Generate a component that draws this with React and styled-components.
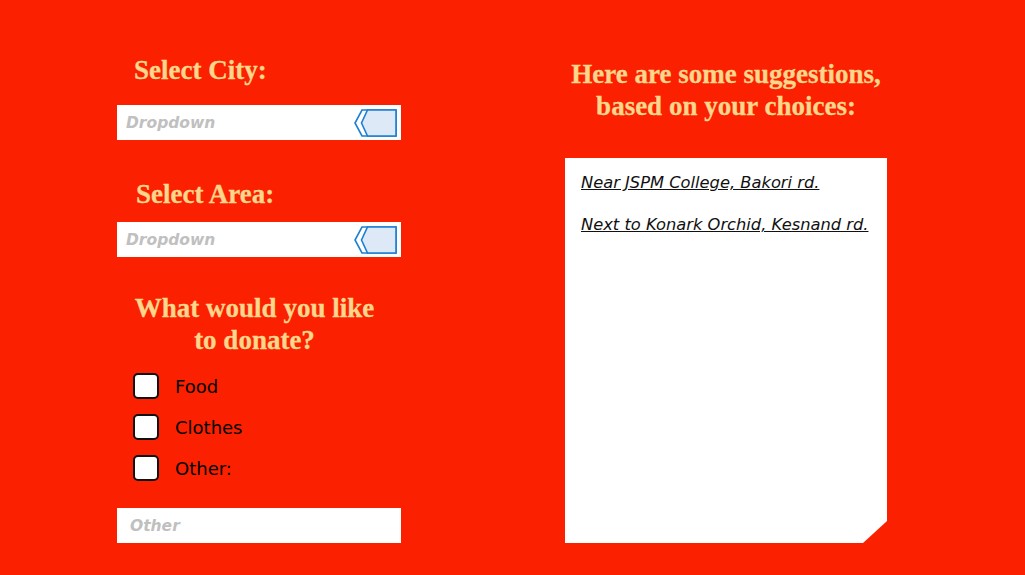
import React from 'react';
import styled, { createGlobalStyle } from 'styled-components';

const GlobalStyle = createGlobalStyle`
  html, body {
    margin: 0;
    padding: 0;
    background: #fb2100;
  }
`;

const Page = styled.div`
  display: flex;
  flex-direction: row;
  align-items: flex-start;
  gap: 164px;
  min-height: 575px;
  padding-left: 117px;
  box-sizing: border-box;
  background: #fb2100;
`;

const LeftColumn = styled.div`
  display: flex;
  flex-direction: column;
  width: 284px;
  padding-top: 56px;
`;

const RightColumn = styled.div`
  display: flex;
  flex-direction: column;
  width: 322px;
  padding-top: 58px;
`;

const Heading = styled.h2`
  margin: 0;
  margin-top: ${(p) => p.$top || 0}px;
  margin-bottom: ${(p) => p.$bottom || 0}px;
  padding-left: ${(p) => p.$indent || 0}px;
  padding-right: ${(p) => p.$right || 0}px;
  text-align: ${(p) => (p.$center ? 'center' : 'left')};
  font-family: 'Liberation Serif', 'Times New Roman', serif;
  font-weight: bold;
  font-size: 27px;
  line-height: ${(p) => (p.$center ? '32px' : '28px')};
  color: #ffd68c;
  -webkit-text-stroke: 0.3px #ffd68c;
`;

const Field = styled.div`
  display: flex;
  align-items: center;
  justify-content: space-between;
  height: 35px;
  background: white;
  padding: 0 4px 0 ${(p) => p.$pad || 9}px;
  box-sizing: border-box;
  margin-top: ${(p) => p.$top || 0}px;
`;

const Placeholder = styled.span`
  font-family: 'DejaVu Sans', sans-serif;
  font-style: italic;
  font-weight: bold;
  font-size: 15.5px;
  color: #c0c0c0;
`;

const CheckList = styled.div`
  display: flex;
  flex-direction: column;
  gap: 15px;
  margin-top: 17px;
  padding-left: 16px;
`;

const CheckRow = styled.label`
  display: flex;
  align-items: center;
  gap: 16px;
`;

const Box = styled.span`
  width: 26px;
  height: 26px;
  box-sizing: border-box;
  border: 2px solid #111;
  border-radius: 5px;
  background: white;
`;

const CheckLabel = styled.span`
  font-family: 'DejaVu Sans', sans-serif;
  font-size: 18px;
  color: #000;
`;

const Panel = styled.div`
  display: flex;
  flex-direction: column;
  align-items: flex-start;
  gap: 20px;
  height: 385px;
  margin-top: 36px;
  padding: 14px 0 14px 16px;
  box-sizing: border-box;
  background: white;
  clip-path: polygon(0 0, 100% 0, 100% calc(100% - 22px), calc(100% - 24px) 100%, 0 100%);
`;

const Suggestion = styled.a`
  font-family: 'DejaVu Sans', sans-serif;
  font-style: italic;
  font-size: 16.3px;
  line-height: 22px;
  white-space: nowrap;
  color: #111;
  text-decoration: underline;
`;

const DropIcon = () => (
  <svg width="44" height="28" viewBox="0 0 44 28">
    <path d="M9 1 H43 V27 H9 L2 14 Z" fill="white" stroke="#1b7fd4" strokeWidth="1.6" />
    <path d="M14.5 1 H43 V27 H14.5 L8.5 14 Z" fill="#dde9f6" stroke="#1b7fd4" strokeWidth="1.6" />
  </svg>
);

const Dropdown = ({ top }) => (
  <Field $top={top}>
    <Placeholder>Dropdown</Placeholder>
    <DropIcon />
  </Field>
);

const options = ['Food', 'Clothes', 'Other:'];
const suggestions = ['Near JSPM College, Bakori rd.', 'Next to Konark Orchid, Kesnand rd.'];

const App = () => (
  <>
    <GlobalStyle />
    <Page>
      <LeftColumn>
        <Heading $indent={17}>Select City:</Heading>
        <Dropdown top={21} />
        <Heading $indent={19} $top={40}>Select Area:</Heading>
        <Dropdown top={14} />
        <Heading $center $right={9} $top={35}>
          What would you like
          <br />
          to donate?
        </Heading>
        <CheckList>
          {options.map((o) => (
            <CheckRow key={o}>
              <Box />
              <CheckLabel>{o}</CheckLabel>
            </CheckRow>
          ))}
        </CheckList>
        <Field $top={27} $pad={13}>
          <Placeholder>Other</Placeholder>
        </Field>
      </LeftColumn>
      <RightColumn>
        <Heading $center>
          Here are some suggestions,
          <br />
          based on your choices:
        </Heading>
        <Panel>
          {suggestions.map((s) => (
            <Suggestion key={s}>{s}</Suggestion>
          ))}
        </Panel>
      </RightColumn>
    </Page>
  </>
);

export default App;
